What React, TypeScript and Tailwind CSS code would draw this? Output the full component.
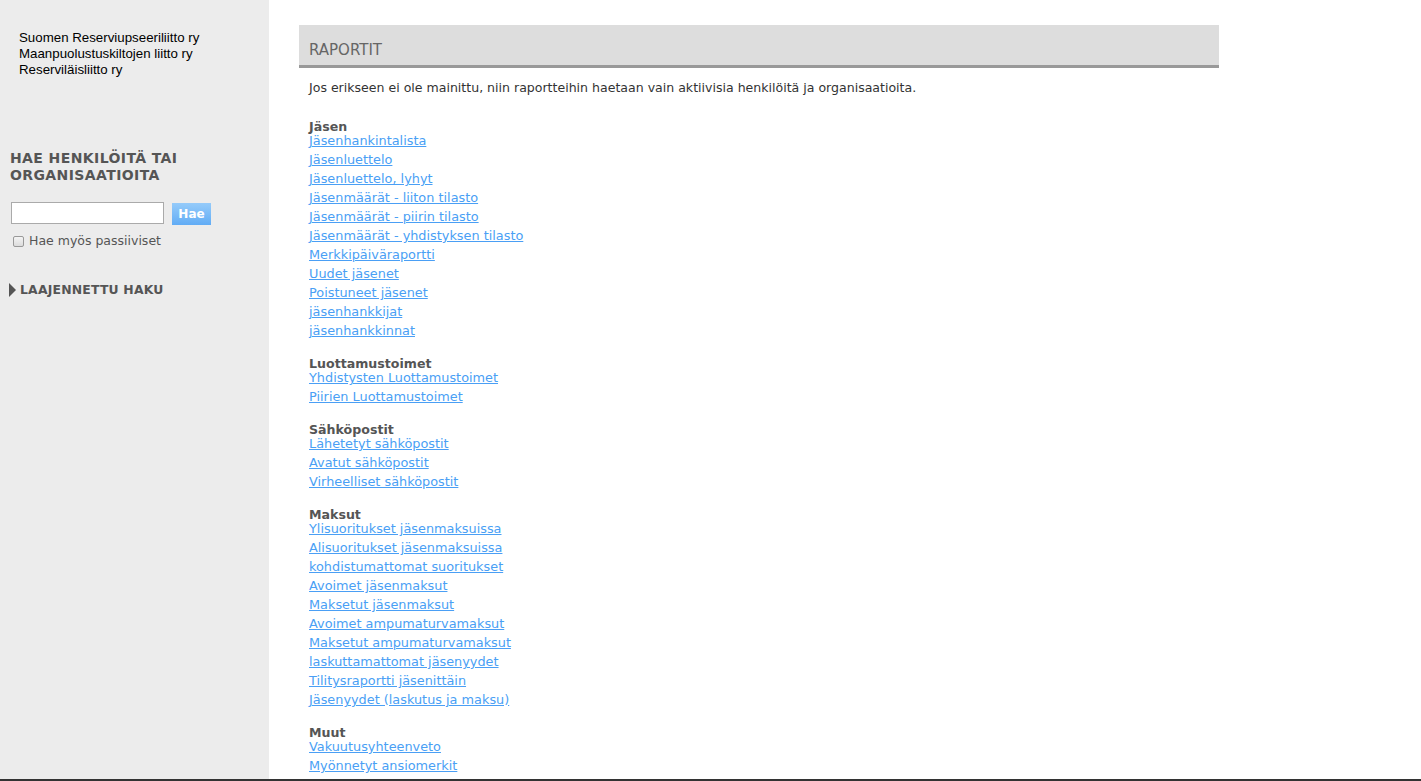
import React from "react";

const groups: { title: string; links: string[] }[] = [
  {
    title: "Jäsen",
    links: [
      "Jäsenhankintalista",
      "Jäsenluettelo",
      "Jäsenluettelo, lyhyt",
      "Jäsenmäärät - liiton tilasto",
      "Jäsenmäärät - piirin tilasto",
      "Jäsenmäärät - yhdistyksen tilasto",
      "Merkkipäiväraportti",
      "Uudet jäsenet",
      "Poistuneet jäsenet",
      "jäsenhankkijat",
      "jäsenhankkinnat",
    ],
  },
  {
    title: "Luottamustoimet",
    links: ["Yhdistysten Luottamustoimet", "Piirien Luottamustoimet"],
  },
  {
    title: "Sähköpostit",
    links: ["Lähetetyt sähköpostit", "Avatut sähköpostit", "Virheelliset sähköpostit"],
  },
  {
    title: "Maksut",
    links: [
      "Ylisuoritukset jäsenmaksuissa",
      "Alisuoritukset jäsenmaksuissa",
      "kohdistumattomat suoritukset",
      "Avoimet jäsenmaksut",
      "Maksetut jäsenmaksut",
      "Avoimet ampumaturvamaksut",
      "Maksetut ampumaturvamaksut",
      "laskuttamattomat jäsenyydet",
      "Tilitysraportti jäsenittäin",
      "Jäsenyydet (laskutus ja maksu)",
    ],
  },
  {
    title: "Muut",
    links: ["Vakuutusyhteenveto", "Myönnetyt ansiomerkit"],
  },
];

export default function App() {
  return (
    <div className="w-[1421px] h-[781px] overflow-hidden flex flex-col bg-white font-['DejaVu_Sans',sans-serif]">
      <div className="flex h-[779px] overflow-hidden">
        <aside className="w-[269px] shrink-0 bg-[#ececec] h-full">
          <div className="pt-[30px] pl-[19px] font-['Liberation_Sans',Arial,sans-serif] text-[13.3px] leading-[16px] text-black">
            <div>Suomen Reserviupseeriliitto ry</div>
            <div>Maanpuolustuskiltojen liitto ry</div>
            <div>Reserviläisliitto ry</div>
          </div>
          <h2 className="mt-[72px] pl-[10px] text-[14px] leading-[17px] font-bold text-[#555] tracking-[0.4px]">
            HAE HENKILÖITÄ TAI
            <br />
            ORGANISAATIOITA
          </h2>
          <div className="mt-[18px] pl-[11px] flex items-start">
            <input
              type="text"
              className="w-[153px] h-[22px] bg-white border border-[#aaa] outline-none"
            />
            <button className="ml-[8px] mt-[1px] w-[39px] h-[22px] bg-gradient-to-b from-[#95cbfa] to-[#61acf5] text-white font-bold text-[12px] leading-[22px]">
              Hae
            </button>
          </div>
          <label className="mt-[8px] pl-[13px] flex items-center text-[12.5px] leading-[16px] text-[#555]">
            <span className="w-[11px] h-[11px] border border-[#999] rounded-[2px] bg-gradient-to-b from-[#f4f4f4] to-[#dcdcdc]" />
            <span className="ml-[5px]">Hae myös passiiviset</span>
          </label>
          <div className="mt-[33px] pl-[9px] flex items-center">
            <svg width="7" height="14" viewBox="0 0 7 14">
              <polygon points="0,0 7,7 0,14" fill="#555" />
            </svg>
            <span className="ml-[4px] text-[12.4px] leading-[16px] font-bold text-[#555] tracking-[0.2px]">
              LAAJENNETTU HAKU
            </span>
          </div>
        </aside>
        <main className="flex-1 pl-[30px] pt-[25px]">
          <div className="w-[920px] h-[43px] bg-[#dddddd] border-b-[3px] border-[#999] flex items-end pl-[10px] pb-[6px]">
            <span className="text-[15px] text-[#666] leading-[18px]">RAPORTIT</span>
          </div>
          <div className="pl-[10px]">
            <p className="mt-[13px] text-[12.55px] leading-[14px] text-[#333]">
              Jos erikseen ei ole mainittu, niin raportteihin haetaan vain aktiivisia henkilöitä ja organisaatioita.
            </p>
            <div className="mt-[25px]">
              {groups.map((g, i) => (
                <div key={g.title} className={i === 0 ? "" : "mt-[19px]"}>
                  <div className="text-[12.6px] leading-[14px] font-bold text-[#555]">{g.title}</div>
                  {g.links.map((l) => (
                    <div key={l} className="mb-[5px] text-[12.85px] leading-[14px]">
                      <a href="#" className="text-[#4a9ff5] underline">
                        {l}
                      </a>
                    </div>
                  ))}
                </div>
              ))}
            </div>
          </div>
        </main>
      </div>
      <div className="h-[2px] bg-[#333]" />
    </div>
  );
}
